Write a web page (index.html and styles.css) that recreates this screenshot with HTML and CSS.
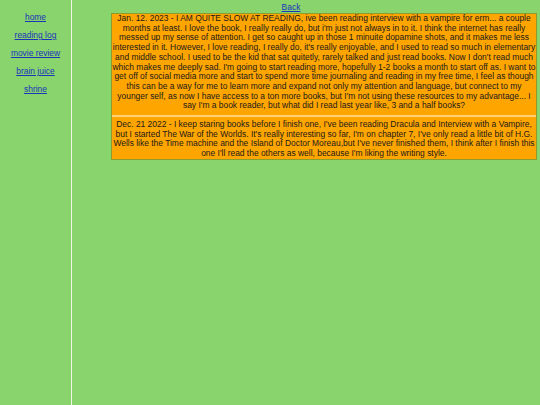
FILE: index.html
```html
<!DOCTYPE html>
<html>
<head>
<meta charset="utf-8">
<title>reading log</title>
<link rel="stylesheet" href="styles.css">
</head>
<body>
<div class="page">
  <nav class="sidebar">
    <a href="#">home</a>
    <a href="#">reading log</a>
    <a href="#">movie review</a>
    <a href="#">brain juice</a>
    <a href="#">shrine</a>
  </nav>
  <main class="content">
    <div class="back"><a href="#">Back</a></div>
    <div class="log">
      <div class="entry first">Jan. 12. 2023 - I AM QUITE SLOW AT READING, ive been reading interview with a vampire for erm... a couple months at least. I love the book, I really really do, but i'm just not always in to it. I think the internet has really messed up my sense of attention. I get so caught up in those 1 minuite dopamine shots, and it makes me less interested in it. However, I love reading, I really do, it's really enjoyable, and I used to read so much in elementary and middle school. I used to be the kid that sat quitetly, rarely talked and just read books. Now I don't read much which makes me deeply sad. I'm going to start reading more, hopefully 1-2 books a month to start off as. I want to get off of social media more and start to spend more time journaling and reading in my free time, I feel as though this can be a way for me to learn more and expand not only my attention and language, but connect to my younger self, as now I have access to a ton more books, but I'm not using these resources to my advantage... I say I'm a book reader, but what did I read last year like, 3 and a half books?</div>
      <div class="entry">Dec. 21 2022 - I keep staring books before I finish one, I've been reading Dracula and Interview with a Vampire, but I started The War of the Worlds. It's really interesting so far, I'm on chapter 7, I've only read a little bit of H.G. Wells like the Time machine and the Island of Doctor Moreau,but I've never finished them, I think after I finish this one I'll read the others as well, because I'm liking the writing style.</div>
    </div>
  </main>
</div>
</body>
</html>
```
FILE: styles.css
```css
html, body {
  margin: 0;
  padding: 0;
  height: 100%;
  background: #89d46d;
}
body {
  font-family: "Liberation Sans", Arial, sans-serif;
  font-size: 8.45px;
  line-height: 9.7px;
  color: #1a1a1a;
}
.page {
  display: flex;
  height: 100%;
}
.sidebar {
  width: 72px;
  flex: none;
  border-right: 1px solid #eef6e6;
  display: flex;
  flex-direction: column;
  align-items: center;
  gap: 8.3px;
  padding-top: 13px;
  box-sizing: border-box;
}
a {
  color: #1a35b8;
}
.content {
  flex: none;
  padding: 3px 0 0 39px;
  display: flex;
  flex-direction: column;
  align-items: flex-start;
}
.back {
  text-align: center;
  width: 360px;
  height: 10px;
}
.log {
  width: 426px;
  box-sizing: border-box;
  background: #ffa500;
  border: 1px solid #8d9c2a;
  text-align: center;
}
.entry {
  padding: 0 0 4px;
}
.entry + .entry {
  border-top: 2px solid #ffd27a;
  padding: 3px 0 0;
}
```
